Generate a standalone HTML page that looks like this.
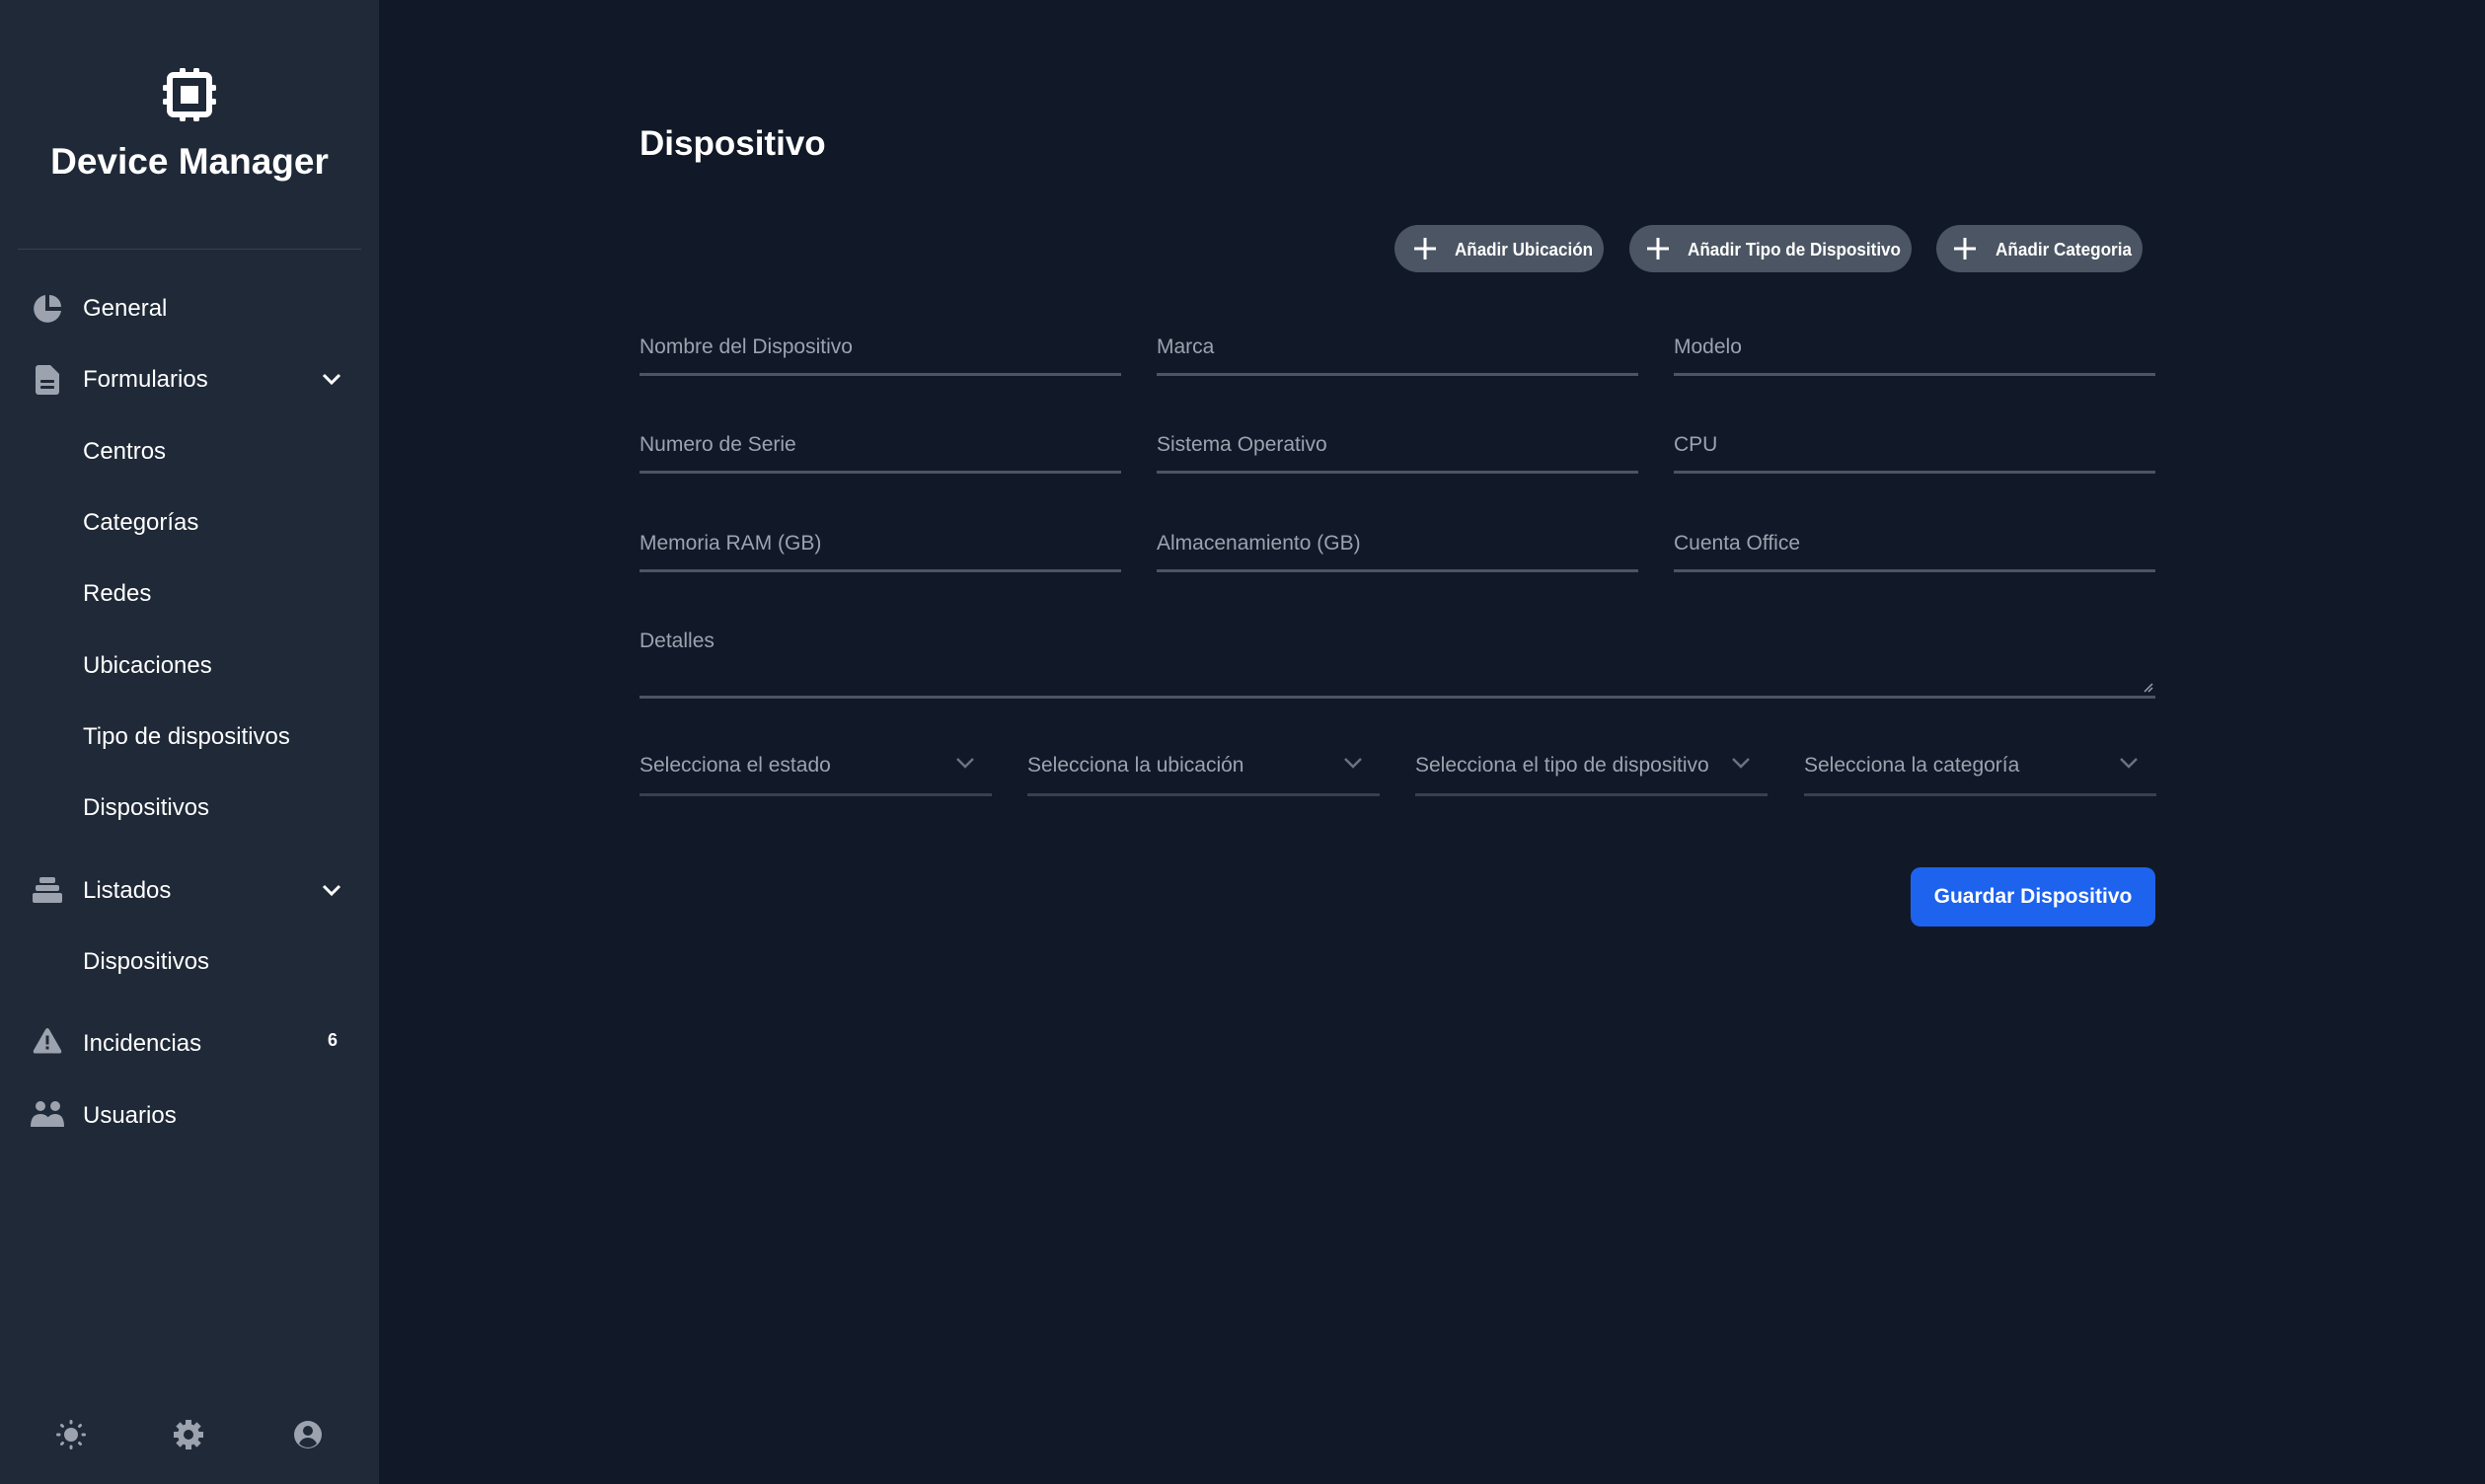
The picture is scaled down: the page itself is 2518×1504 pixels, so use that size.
<!DOCTYPE html>
<html><head><meta charset="utf-8"><style>
*{margin:0;padding:0;box-sizing:border-box}
body{width:2518px;height:1504px;background:#111827;font-family:"Liberation Sans",sans-serif;position:relative;overflow:hidden}
.sb{position:absolute;left:0;top:0;width:384px;height:1504px;background:#1f2937}
.a{position:absolute}
.nav{position:absolute;left:84px;color:#fff;font-size:24px;line-height:30px;transform:translateY(-15px)}
.ic{position:absolute;transform:translate(-50%,-50%)}
.lbl{position:absolute;color:#9ca3af;font-size:21px;line-height:26px;transform:translateY(-13px);white-space:nowrap}
.ln{position:absolute;height:3px;background:#4b5563}
.sl{position:absolute;height:3px;background:#374151}
.btn{position:absolute;top:228px;height:48px;border-radius:24px;background:#4b5563}
.btn svg{position:absolute;left:0;top:0}
</style></head><body>
<div class="sb">
<svg class="a" style="left:165px;top:69px" width="54" height="54" viewBox="0 0 54 54"><rect x="7" y="7" width="40" height="40" rx="4" fill="none" stroke="#fff" stroke-width="6"/><rect x="18" y="18" width="18" height="18" fill="#fff"/><g stroke="#fff" stroke-width="6" stroke-linecap="round"><line x1="20" y1="2" x2="20" y2="7"/><line x1="34" y1="2" x2="34" y2="7"/><line x1="20" y1="47" x2="20" y2="52"/><line x1="34" y1="47" x2="34" y2="52"/><line x1="2" y1="20" x2="7" y2="20"/><line x1="2" y1="34" x2="7" y2="34"/><line x1="47" y1="20" x2="52" y2="20"/><line x1="47" y1="34" x2="52" y2="34"/></g></svg>
<div class="a" style="left:0;width:384px;top:142px;text-align:center;color:#fff;font-weight:bold;font-size:37px;line-height:44px">Device Manager</div>
<div class="a" style="left:18px;top:252px;width:348px;height:1px;background:#374151"></div>

<svg class="ic" style="left:48px;top:313px" width="30" height="30" viewBox="0 0 30 30"><path d="M13 1A14 14 0 1 0 29 17H13Z" fill="#9ca3af"/><path d="M17 1V13H29A12 12 0 0 0 17 1Z" fill="#9ca3af"/></svg>
<div class="nav" style="top:313px">General</div>
<svg class="ic" style="left:48px;top:385px" width="24" height="30" viewBox="0 0 24 30"><path d="M3 0H15L24 9V27A3 3 0 0 1 21 30H3A3 3 0 0 1 0 27V3A3 3 0 0 1 3 0Z" fill="#9ca3af"/><rect x="5" y="15" width="14" height="3" rx="1" fill="#1f2937"/><rect x="5" y="21" width="14" height="3" rx="1" fill="#1f2937"/></svg>
<div class="nav" style="top:385px">Formularios</div>
<svg class="ic" style="left:336px;top:384px" width="20" height="14" viewBox="0 0 20 14"><path d="M2 3L10 11L18 3" fill="none" stroke="#fff" stroke-width="3"/></svg>
<div class="nav" style="top:458px">Centros</div>
<div class="nav" style="top:530px">Categorías</div>
<div class="nav" style="top:602px">Redes</div>
<div class="nav" style="top:675px">Ubicaciones</div>
<div class="nav" style="top:747px">Tipo de dispositivos</div>
<div class="nav" style="top:819px">Dispositivos</div>
<svg class="ic" style="left:48px;top:902px" width="30" height="26" viewBox="0 0 30 26"><rect x="7" y="0" width="16" height="6" rx="2" fill="#9ca3af"/><rect x="3" y="8" width="24" height="6" rx="2" fill="#9ca3af"/><rect x="0" y="16" width="30" height="10" rx="2" fill="#9ca3af"/></svg>
<div class="nav" style="top:903px">Listados</div>
<svg class="ic" style="left:336px;top:902px" width="20" height="14" viewBox="0 0 20 14"><path d="M2 3L10 11L18 3" fill="none" stroke="#fff" stroke-width="3"/></svg>
<div class="nav" style="top:975px">Dispositivos</div>
<svg class="ic" style="left:48px;top:1055px" width="30" height="27" viewBox="0 0 30 27"><path d="M13 2Q15 -1 17 2L29 23Q30 26 27 26H3Q0 26 1 23Z" fill="#9ca3af"/><rect x="13.5" y="8" width="3" height="9" fill="#1f2937"/><rect x="13.5" y="19" width="3" height="3" fill="#1f2937"/></svg>
<div class="nav" style="top:1058px">Incidencias</div>
<div class="a" style="left:332px;top:1044px;color:#fff;font-weight:bold;font-size:18px">6</div>
<svg class="ic" style="left:48px;top:1129px" width="34" height="26" viewBox="0 0 34 26"><circle cx="10" cy="5" r="5" fill="#9ca3af"/><circle cx="25" cy="5" r="5" fill="#9ca3af"/><path d="M0 26Q0 13 10 13Q20 13 20 26Z" fill="#9ca3af"/><path d="M14 26Q16 13 25 13Q34 13 34 26Z" fill="#9ca3af"/></svg>
<div class="nav" style="top:1131px">Usuarios</div>

<svg class="ic" style="left:72px;top:1454px" width="30" height="30" viewBox="0 0 30 30"><circle cx="15" cy="15" r="7" fill="#9ca3af"/><g stroke="#9ca3af" stroke-width="3" stroke-linecap="round"><line x1="15" y1="1.5" x2="15" y2="3"/><line x1="15" y1="27" x2="15" y2="28.5"/><line x1="1.5" y1="15" x2="3" y2="15"/><line x1="27" y1="15" x2="28.5" y2="15"/><line x1="5.5" y1="5.5" x2="6.5" y2="6.5"/><line x1="23.5" y1="23.5" x2="24.5" y2="24.5"/><line x1="5.5" y1="24.5" x2="6.5" y2="23.5"/><line x1="23.5" y1="6.5" x2="24.5" y2="5.5"/></g></svg>
<svg class="ic" style="left:191px;top:1454px" width="30" height="30" viewBox="0 0 30 30"><g fill="#9ca3af"><circle cx="15" cy="15" r="11"/><g><rect x="12" y="0" width="6" height="6"/><rect x="12" y="24" width="6" height="6"/><rect x="0" y="12" width="6" height="6"/><rect x="24" y="12" width="6" height="6"/></g><g transform="rotate(45 15 15)"><rect x="12" y="0" width="6" height="6"/><rect x="12" y="24" width="6" height="6"/><rect x="0" y="12" width="6" height="6"/><rect x="24" y="12" width="6" height="6"/></g></g><circle cx="15" cy="15" r="5" fill="#1f2937"/></svg>
<svg class="ic" style="left:312px;top:1454px" width="30" height="30" viewBox="0 0 30 30"><circle cx="15" cy="15" r="14" fill="#9ca3af"/><circle cx="15" cy="11" r="5" fill="#1f2937"/><path d="M6 24Q9 18 15 18Q21 18 24 24Q20 28 15 28Q10 28 6 24Z" fill="#1f2937"/></svg>
</div>

<div class="a" style="left:648px;top:124px;color:#fff;font-weight:bold;font-size:35px;line-height:44px">Dispositivo</div>

<div class="btn" style="left:1413px;width:212px"><svg width="212" height="48"><path d="M31 13V35M20 24H42" stroke="#fff" stroke-width="3"/><text x="61" y="31" fill="#fff" font-family="Liberation Sans" font-weight="bold" font-size="18" textLength="140" lengthAdjust="spacingAndGlyphs">Añadir Ubicación</text></svg></div>
<div class="btn" style="left:1651px;width:286px"><svg width="286" height="48"><path d="M29 13V35M18 24H40" stroke="#fff" stroke-width="3"/><text x="59" y="31" fill="#fff" font-family="Liberation Sans" font-weight="bold" font-size="18" textLength="216" lengthAdjust="spacingAndGlyphs">Añadir Tipo de Dispositivo</text></svg></div>
<div class="btn" style="left:1962px;width:209px"><svg width="209" height="48"><path d="M29 13V35M18 24H40" stroke="#fff" stroke-width="3"/><text x="60" y="31" fill="#fff" font-family="Liberation Sans" font-weight="bold" font-size="18" textLength="138" lengthAdjust="spacingAndGlyphs">Añadir Categoria</text></svg></div>

<div class="lbl" style="left:648px;top:352px">Nombre del Dispositivo</div>
<div class="lbl" style="left:1172px;top:352px">Marca</div>
<div class="lbl" style="left:1696px;top:352px">Modelo</div>
<div class="ln" style="left:648px;top:378px;width:488px"></div>
<div class="ln" style="left:1172px;top:378px;width:488px"></div>
<div class="ln" style="left:1696px;top:378px;width:488px"></div>

<div class="lbl" style="left:648px;top:451px">Numero de Serie</div>
<div class="lbl" style="left:1172px;top:451px">Sistema Operativo</div>
<div class="lbl" style="left:1696px;top:451px">CPU</div>
<div class="ln" style="left:648px;top:477px;width:488px"></div>
<div class="ln" style="left:1172px;top:477px;width:488px"></div>
<div class="ln" style="left:1696px;top:477px;width:488px"></div>

<div class="lbl" style="left:648px;top:551px">Memoria RAM (GB)</div>
<div class="lbl" style="left:1172px;top:551px">Almacenamiento (GB)</div>
<div class="lbl" style="left:1696px;top:551px">Cuenta Office</div>
<div class="ln" style="left:648px;top:577px;width:488px"></div>
<div class="ln" style="left:1172px;top:577px;width:488px"></div>
<div class="ln" style="left:1696px;top:577px;width:488px"></div>

<div class="lbl" style="left:648px;top:650px">Detalles</div>
<div class="ln" style="left:648px;top:705px;width:1536px"></div>
<svg class="a" style="left:2172px;top:692px" width="10" height="10" viewBox="0 0 10 10"><path d="M1 9L9 1M5 9L9 5" stroke="#9ca3af" stroke-width="1.5"/></svg>

<div class="lbl" style="left:648px;top:776px">Selecciona el estado</div>
<div class="lbl" style="left:1041px;top:776px">Selecciona la ubicación</div>
<div class="lbl" style="left:1434px;top:776px">Selecciona el tipo de dispositivo</div>
<div class="lbl" style="left:1828px;top:776px">Selecciona la categoría</div>
<svg class="a" style="left:968px;top:767px" width="20" height="12" viewBox="0 0 20 12"><path d="M2 2L10 10L18 2" fill="none" stroke="#6b7280" stroke-width="2.5"/></svg>
<svg class="a" style="left:1361px;top:767px" width="20" height="12" viewBox="0 0 20 12"><path d="M2 2L10 10L18 2" fill="none" stroke="#6b7280" stroke-width="2.5"/></svg>
<svg class="a" style="left:1754px;top:767px" width="20" height="12" viewBox="0 0 20 12"><path d="M2 2L10 10L18 2" fill="none" stroke="#6b7280" stroke-width="2.5"/></svg>
<svg class="a" style="left:2147px;top:767px" width="20" height="12" viewBox="0 0 20 12"><path d="M2 2L10 10L18 2" fill="none" stroke="#6b7280" stroke-width="2.5"/></svg>
<div class="sl" style="left:648px;top:804px;width:357px"></div>
<div class="sl" style="left:1041px;top:804px;width:357px"></div>
<div class="sl" style="left:1434px;top:804px;width:357px"></div>
<div class="sl" style="left:1828px;top:804px;width:357px"></div>

<div class="a" style="left:1936px;top:879px;width:248px;height:60px;border-radius:10px;background:#1d63ed;color:#fff;font-weight:bold;font-size:21px;line-height:60px;text-align:center">Guardar Dispositivo</div>
</body></html>
